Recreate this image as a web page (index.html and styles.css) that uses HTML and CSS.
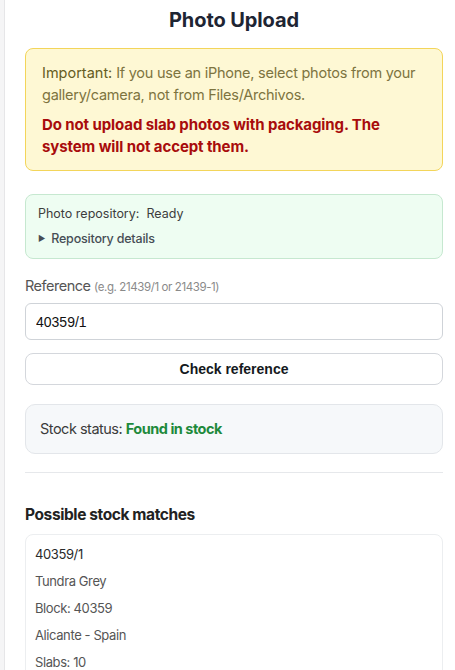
FILE: index.html
```html
<!DOCTYPE html>
<html lang="en">
<head>
<meta charset="utf-8">
<title>Photo Upload</title>
<link rel="stylesheet" href="styles.css">
</head>
<body>
<div class="layout">
  <div class="rail"></div>
  <main class="main">
    <h1 class="title">Photo Upload</h1>

    <div class="warning">
      <p class="warning-info"><span class="warning-key">Important:</span> If you use an iPhone, select photos from your gallery/camera, not from Files/Archivos.</p>
      <p class="warning-alert">Do not upload slab photos with packaging. The system will not accept them.</p>
    </div>

    <div class="repo">
      <div class="repo-status">Photo repository:&nbsp; Ready</div>
      <div class="repo-details"><span class="caret">&#9654;</span>Repository details</div>
    </div>

    <label class="field-label" for="ref">Reference <span class="hint">(e.g. 21439/1 or 21439-1)</span></label>
    <input class="field-input" id="ref" type="text" value="40359/1">
    <button class="check-btn" type="button">Check reference</button>

    <div class="stock">Stock status: <strong class="stock-ok">Found in stock</strong></div>

    <hr class="divider">

    <h2 class="section-title">Possible stock matches</h2>
    <div class="matches">
      <div class="match-line match-ref">40359/1</div>
      <div class="match-line">Tundra Grey</div>
      <div class="match-line">Block: 40359</div>
      <div class="match-line">Alicante - Spain</div>
      <div class="match-line">Slabs: 10</div>
    </div>
  </main>
</div>
</body>
</html>
```

FILE: styles.css
```css
html, body {
  margin: 0;
  padding: 0;
  background: #ffffff;
}

body {
  font-family: Inter, "Noto Sans", sans-serif;
  color: #333;
}

.layout {
  display: flex;
  min-height: 670px;
}

.rail {
  width: 4px;
  flex: 0 0 4px;
  background: #f5f5f6;
  border-right: 1px solid #e6e6e8;
}

.main {
  flex: 1;
  padding: 0 12px 0 20px;
  display: flex;
  flex-direction: column;
}

.title {
  margin: 5px 0 13px;
  text-align: center;
  font-size: 20px;
  line-height: 30px;
  font-weight: 700;
  color: #1e2533;
  letter-spacing: -0.1px;
}

.warning {
  background: #fef8d4;
  border: 1px solid #f3d55a;
  border-radius: 8px;
  padding: 13px 16px 12px;
}

.warning p {
  margin: 0;
  line-height: 22px;
}

.warning-info {
  font-size: 14.5px;
  color: #7d7440;
  letter-spacing: -0.25px;
}

.warning-key {
  color: #655c22;
  letter-spacing: 0;
}

.warning-alert {
  margin-top: 8px !important;
  font-size: 15px;
  color: #a80c0c;
  font-weight: 700;
  letter-spacing: -0.1px;
}

.repo {
  margin-top: 23px;
  background: #eefdf2;
  border: 1px solid #c6e8d0;
  border-radius: 8px;
  padding: 9px 12px 8px;
  font-size: 12.5px;
  color: #3d3d3d;
}

.repo-status {
  line-height: 20px;
}

.repo-details {
  margin-top: 5px;
  line-height: 20px;
  font-weight: 500;
  font-size: 12.5px;
  color: #464d55;
  letter-spacing: -0.2px;
}

.caret {
  font-size: 8px;
  margin-right: 6px;
  position: relative;
  top: -2px;
}

.field-label {
  margin-top: 16px;
  font-size: 14.5px;
  line-height: 22px;
  color: #555;
  letter-spacing: -0.5px;
}

.hint {
  font-size: 11.5px;
  color: #8a8a8a;
  letter-spacing: -0.4px;
}

.field-input {
  margin-top: 5px;
  box-sizing: border-box;
  width: 100%;
  height: 37px;
  padding: 0 10px;
  border: 1px solid #cfd3d8;
  border-radius: 6px;
  font-family: "Liberation Sans", Arial, sans-serif;
  font-size: 14px;
  color: #111;
  background: #fff;
}

.check-btn {
  margin-top: 13px;
  box-sizing: border-box;
  width: 100%;
  height: 32px;
  border: 1px solid #d4d7dc;
  border-radius: 8px;
  background: #fff;
  font-family: "Liberation Sans", Arial, sans-serif;
  font-size: 14px;
  font-weight: 700;
  color: #141820;
}

.stock {
  margin-top: 19px;
  background: #f6f8fa;
  border: 1px solid #e3e6ea;
  border-radius: 10px;
  padding: 13px 14px;
  font-size: 14.5px;
  line-height: 22px;
  color: #3b3b3b;
  letter-spacing: -0.5px;
}

.stock-ok {
  color: #1e8a3c;
  font-weight: 700;
}

.divider {
  margin: 18px 0 0;
  border: 0;
  border-top: 1px solid #e6e8eb;
  width: 100%;
}

.section-title {
  margin: 31px 0 8px;
  font-size: 15.5px;
  line-height: 22px;
  font-weight: 700;
  color: #222;
  letter-spacing: -0.4px;
}

.matches {
  border: 1px solid #eceef0;
  border-radius: 8px;
  padding: 6px 9px;
}

.match-line {
  font-size: 13px;
  line-height: 27px;
  color: #555;
  letter-spacing: -0.4px;
}

.match-ref {
  color: #2a2a2a;
}
```
